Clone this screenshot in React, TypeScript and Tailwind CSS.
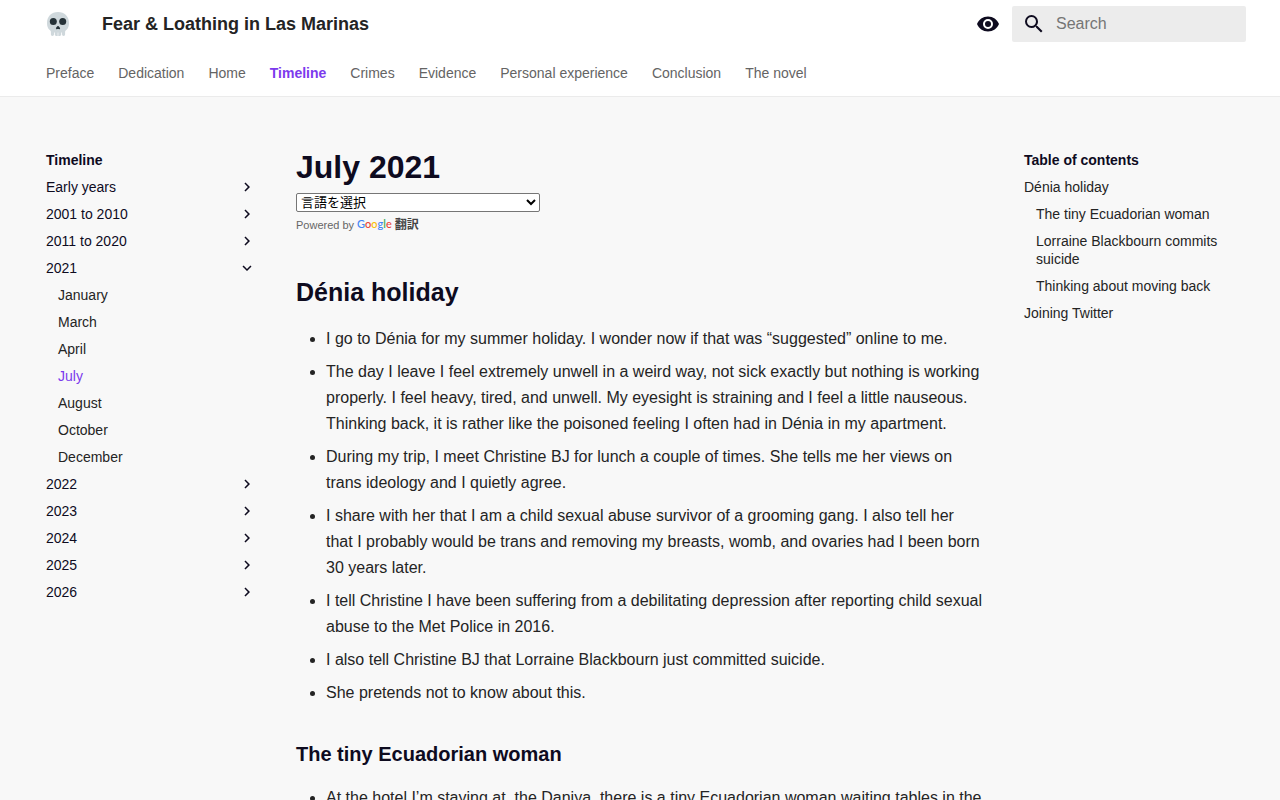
import React, { useState } from 'react';

const tabs = ['Preface', 'Dedication', 'Home', 'Timeline', 'Crimes', 'Evidence', 'Personal experience', 'Conclusion', 'The novel'];

const sections = [
  { title: 'Early years', pages: [] },
  { title: '2001 to 2010', pages: [] },
  { title: '2011 to 2020', pages: [] },
  { title: '2021', pages: ['January', 'March', 'April', 'July', 'August', 'October', 'December'] },
  { title: '2022', pages: [] },
  { title: '2023', pages: [] },
  { title: '2024', pages: [] },
  { title: '2025', pages: [] },
  { title: '2026', pages: [] },
];

const holiday = [
  'I go to Dénia for my summer holiday. I wonder now if that was “suggested” online to me.',
  'The day I leave I feel extremely unwell in a weird way, not sick exactly but nothing is working properly. I feel heavy, tired, and unwell. My eyesight is straining and I feel a little nauseous. Thinking back, it is rather like the poisoned feeling I often had in Dénia in my apartment.',
  'During my trip, I meet Christine BJ for lunch a couple of times. She tells me her views on trans ideology and I quietly agree.',
  'I share with her that I am a child sexual abuse survivor of a grooming gang. I also tell her that I probably would be trans and removing my breasts, womb, and ovaries had I been born 30 years later.',
  'I tell Christine I have been suffering from a debilitating depression after reporting child sexual abuse to the Met Police in 2016.',
  'I also tell Christine BJ that Lorraine Blackbourn just committed suicide.',
  'She pretends not to know about this.',
];

function Skull() {
  return (
    <svg viewBox="0 0 24 24" className="size-6" aria-hidden="true">
      <path
        fill="#cfd8dc"
        d="M12 0C5.400 0 1 4.600 1 11c0 3.200.8 5.400 2.700 6.900.9.7 1.200 1.200 1.200 2.100v2.300c0 1 .6 1.700 1.500 1.700s1.600-.7 1.600-1.700V20.500h.8v1.800c0 1 .6 1.700 1.500 1.700h3.400c.9 0 1.500-.7 1.500-1.700V20.500h.8v1.800c0 1 .7 1.700 1.600 1.700s1.500-.7 1.500-1.700V20c0-.9.3-1.400 1.200-2.100C22.200 16.400 23 14.200 23 11 23 4.600 18.600 0 12 0z"
      />
      <path stroke="#f1f4f5" strokeWidth=".8" d="M12 20.500V24" />
      <circle cx="7.300" cy="9.600" r="3.500" fill="#263238" />
      <circle cx="16.700" cy="9.600" r="3.500" fill="#263238" />
      <path fill="#263238" d="M12 14c-.8 0-2.100 1.700-2.100 2.500 0 .6.5.8 1 .8.400 0 .7-.2 1.100-.2s.7.2 1.100.2c.5 0 1-.2 1-.8 0-.8-1.300-2.500-2.100-2.500z" />
    </svg>
  );
}

function Chevron({ open }: { open: boolean }) {
  return (
    <svg viewBox="0 0 24 24" className={open ? 'size-[18px] rotate-90' : 'size-[18px]'} fill="currentColor" aria-hidden="true">
      <path d="M8.590 16.580 13.170 12 8.590 7.410 10 6l6 6-6 6z" />
    </svg>
  );
}

export default function App() {
  const [open, setOpen] = useState('2021');
  const [query, setQuery] = useState('');

  return (
    <div className="min-h-screen bg-[#f8f8f8] text-[#242424] font-['Liberation_Sans','Noto_Sans_CJK_JP',sans-serif]">
      <header className="bg-white border-b border-[#ebebeb]">
        <div className="max-w-[1220px] mx-auto pl-4 pr-1">
          <div className="h-12 flex items-center">
            <a href="#home" aria-label="Fear & Loathing in Las Marinas"><Skull /></a>
            <span className="ml-8 flex-1 text-lg font-bold">Fear &amp; Loathing in Las Marinas</span>
            <button className="mr-3 text-[#0e0b1f]" aria-label="Switch colour mode">
              <svg viewBox="0 0 24 24" className="size-6" fill="currentColor" aria-hidden="true">
                <path d="M12 9a3 3 0 0 0-3 3 3 3 0 0 0 3 3 3 3 0 0 0 3-3 3 3 0 0 0-3-3m0 8a5 5 0 0 1-5-5 5 5 0 0 1 5-5 5 5 0 0 1 5 5 5 5 0 0 1-5 5m0-12.500C7 4.500 2.730 7.610 1 12c1.730 4.390 6 7.500 11 7.500s9.270-3.110 11-7.500c-1.730-4.390-6-7.500-11-7.500" />
              </svg>
            </button>
            <label className="w-[234px] h-9 pl-[10px] flex items-center gap-[10px] bg-[#ececec] rounded-xs text-[#0e0b1f]">
              <svg viewBox="0 0 24 24" className="size-6 shrink-0" fill="currentColor" aria-hidden="true">
                <path d="M9.500 3A6.500 6.500 0 0 1 16 9.500c0 1.610-.59 3.090-1.560 4.230l.27.27h.79l5 5-1.500 1.500-5-5v-.79l-.27-.27A6.520 6.520 0 0 1 9.500 16 6.500 6.500 0 0 1 3 9.500 6.500 6.500 0 0 1 9.500 3m0 2C7 5 5 7 5 9.500S7 14 9.500 14 14 12 14 9.500 12 5 9.500 5" />
              </svg>
              <input
                type="text"
                aria-label="Search"
                placeholder="Search"
                className="w-full min-w-0 bg-transparent outline-none placeholder:text-[#757575]"
                value={query}
                onChange={(e) => setQuery(e.target.value)}
              />
            </label>
          </div>
          <nav className="h-12 pt-0.5 flex items-center gap-6 text-sm text-[#646464]">
            {tabs.map((tab) => (
              <a key={tab} href="#tab" className={tab === 'Timeline' ? 'font-bold text-[#7c3aed]' : 'hover:text-[#7c3aed]'}>
                {tab}
              </a>
            ))}
          </nav>
        </div>
      </header>

      <main className="max-w-[1220px] mx-auto px-4 pt-[54px] flex items-start gap-10">
        <nav className="w-[210px] shrink-0 flex flex-col gap-[9px] text-sm leading-[18px] text-[#0e0b1f]">
          <p className="font-bold">Timeline</p>
          {sections.map((section) => (
            <React.Fragment key={section.title}>
              <button
                className="flex justify-between items-center text-left"
                aria-expanded={open === section.title}
                onClick={() => setOpen(open === section.title ? '' : section.title)}
              >
                {section.title}
                <Chevron open={open === section.title} />
              </button>
              {open === section.title && section.pages.map((page) => (
                <a key={page} href="#page" className={page === 'July' ? 'pl-3 text-[#7c3aed]' : 'pl-3 text-[#242424]'}>
                  {page}
                </a>
              ))}
            </React.Fragment>
          ))}
        </nav>

        <article className="flex-1 min-w-0">
          <h1 className="text-[32px] leading-8 font-bold text-[#0e0b1f]">July 2021</h1>
          <select
            aria-label="言語を選択"
            className="mt-[10px] block w-[244px] h-[19px] appearance-auto bg-white border border-[#767676] rounded-xs text-[13px] text-black"
          >
            <option>言語を選択</option>
          </select>
          <p className="mt-1 flex items-center gap-[3px] text-[11px] leading-[18px] text-[#666666]">
            Powered by
            <a href="#translate" className="flex items-center gap-[3px]">
              <span className="pb-0.5 font-[Lato] text-[11px] leading-4 font-medium">
                <span className="text-[#4285f4]">G</span>
                <span className="text-[#ea4335]">o</span>
                <span className="text-[#fbbc05]">o</span>
                <span className="text-[#4285f4]">g</span>
                <span className="text-[#34a853]">l</span>
                <span className="text-[#ea4335]">e</span>
              </span>
              <span className="text-xs leading-[18px] font-bold text-[#444444]">翻訳</span>
            </a>
          </p>

          <h2 className="mt-10 text-[25px] leading-9 font-bold text-[#0e0b1f]">Dénia holiday</h2>
          <ul className="mt-4 pl-[30px] list-disc flex flex-col gap-[7px] leading-[26px]">
            {holiday.map((item) => (
              <li key={item}>{item}</li>
            ))}
          </ul>

          <h3 className="mt-8 text-xl leading-8 font-bold text-[#0e0b1f]">The tiny Ecuadorian woman</h3>
          <ul className="mt-[15px] pl-[30px] list-disc leading-[26px]">
            <li>At the hotel I’m staying at, the Daniya, there is a tiny Ecuadorian woman waiting tables in the</li>
          </ul>
        </article>

        <nav className="w-[210px] shrink-0 flex flex-col gap-[9px] text-sm leading-[18px]">
          <p className="font-bold text-[#0e0b1f]">Table of contents</p>
          <a href="#denia-holiday">Dénia holiday</a>
          <a href="#ecuadorian" className="pl-3">The tiny Ecuadorian woman</a>
          <a href="#lorraine" className="pl-3">Lorraine Blackbourn commits suicide</a>
          <a href="#moving-back" className="pl-3">Thinking about moving back</a>
          <a href="#joining-twitter">Joining Twitter</a>
        </nav>
      </main>
    </div>
  );
}
